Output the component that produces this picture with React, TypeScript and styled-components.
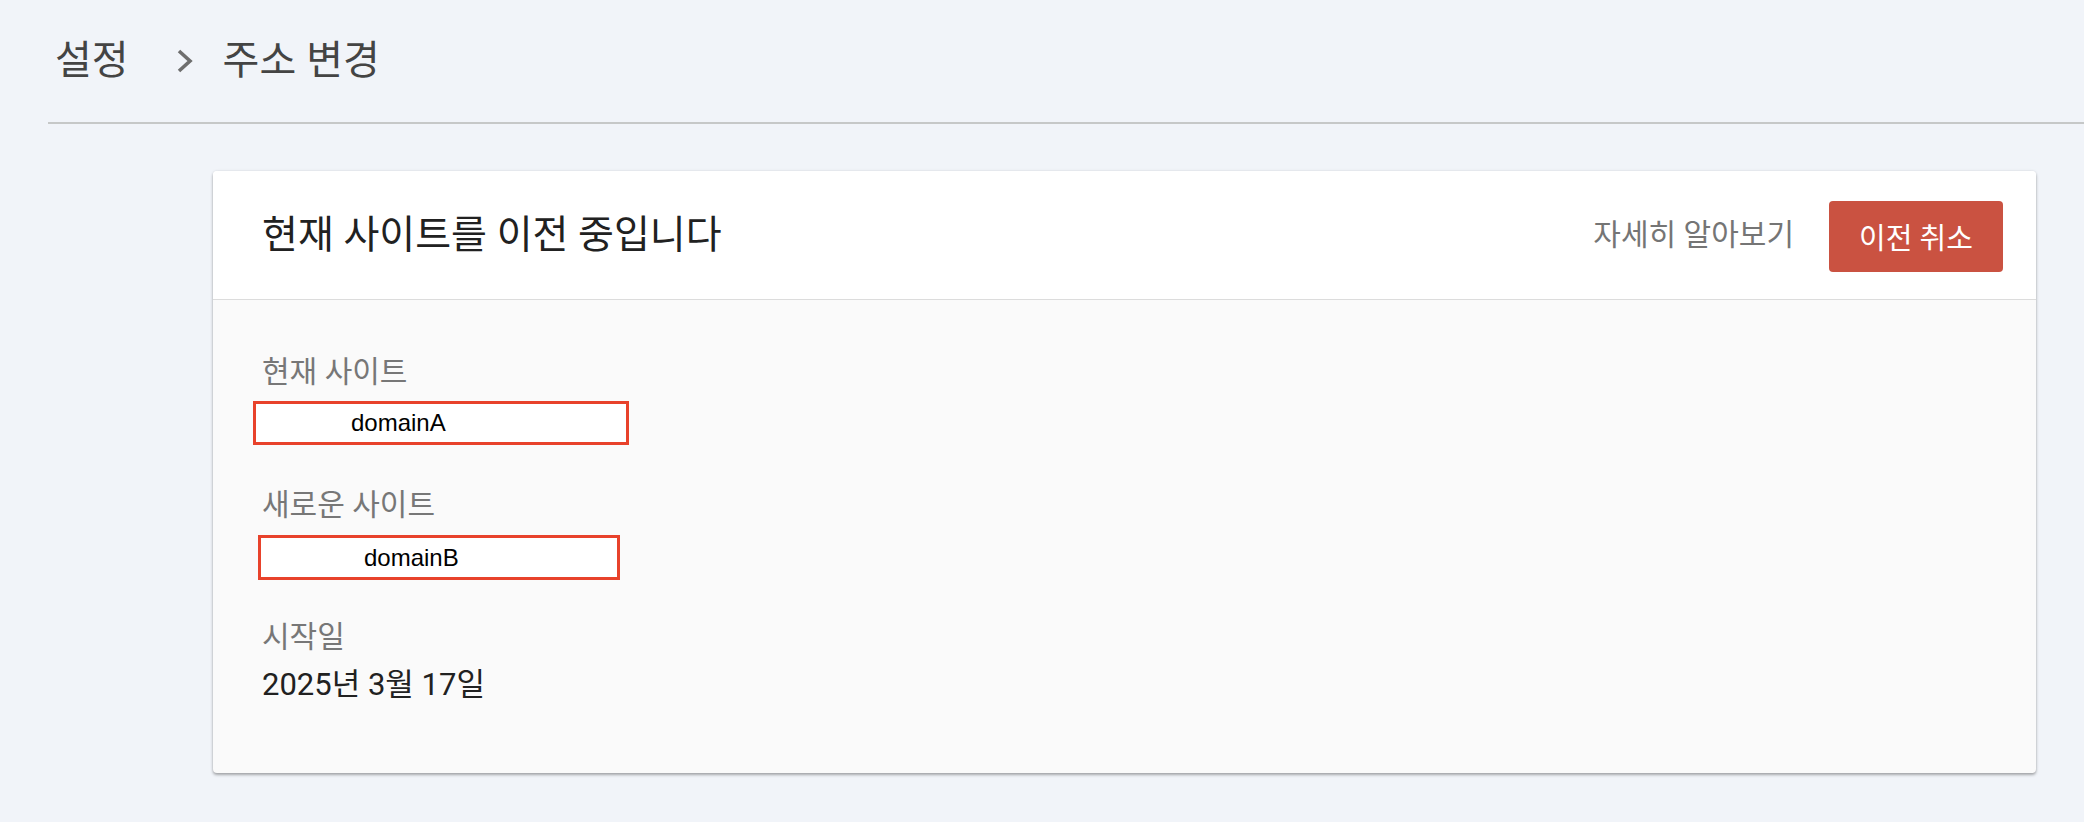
import React from "react";
import styled, { createGlobalStyle } from "styled-components";

const GlobalStyle = createGlobalStyle`
  html, body {
    margin: 0;
    padding: 0;
    background: #f1f4f9;
    font-family: Roboto, "Noto Sans CJK KR", sans-serif;
  }
  * { box-sizing: border-box; }
`;

const Page = styled.div`
  width: 2084px;
  min-height: 822px;
  background: #f1f4f9;
  padding-bottom: 48px;
`;

const Breadcrumb = styled.nav`
  height: 122px;
  display: flex;
  align-items: center;
  padding-left: 55px;
  font-size: 40px;
  color: #444444;
`;

const Crumb = styled.span`
  line-height: 1;
`;

const Chevron = styled.svg`
  width: 20px;
  height: 28px;
  margin: 0 28px 0 46px;
  flex: none;
`;

const Divider = styled.hr`
  margin: 0 0 0 48px;
  border: 0;
  height: 2px;
  background: #c6c8c8;
`;

const Card = styled.section`
  margin: 47px 48px 0 213px;
  border-radius: 4px;
  background: #fafafa;
  box-shadow: 0 2px 3px rgba(0, 0, 0, 0.3), 0 0 3px rgba(0, 0, 0, 0.1);
  overflow: hidden;
`;

const CardHeader = styled.header`
  height: 129px;
  display: flex;
  align-items: center;
  padding: 0 33px 0 49px;
  background: #ffffff;
  border-bottom: 1px solid #dcdcdc;
`;

const Title = styled.h1`
  margin: 0;
  flex: 1;
  font-size: 39px;
  font-weight: 400;
  color: #212121;
  line-height: 1;
`;

const LearnMore = styled.a`
  font-size: 30px;
  color: #757575;
  text-decoration: none;
  margin-right: 35px;
  line-height: 1;
`;

const CancelButton = styled.button`
  width: 174px;
  height: 71px;
  border: 0;
  border-radius: 4px;
  background: #ca5241;
  color: #ffffff;
  font-family: inherit;
  font-size: 29px;
  padding: 0;
  margin-top: 2px;
`;

const CardBody = styled.div`
  padding: 52px 49px 68px 49px;
  display: flex;
  flex-direction: column;
`;

const Field = styled.div<{ $gap: number; $top: number }>`
  display: flex;
  flex-direction: column;
  gap: ${(p) => p.$gap}px;
  margin-top: ${(p) => p.$top}px;
`;

const Label = styled.div`
  font-size: 30px;
  line-height: 40px;
  color: #777777;
`;

const Redacted = styled.div<{ $w: number; $h: number; $shift: number; $pad: number }>`
  width: ${(p) => p.$w}px;
  height: ${(p) => p.$h}px;
  margin-left: ${(p) => p.$shift}px;
  padding-left: ${(p) => p.$pad}px;
  border: 3px solid #e8422b;
  background: #ffffff;
  display: flex;
  align-items: center;
  font-family: "Liberation Sans", Arial, sans-serif;
  font-size: 24px;
  color: #000000;
`;

const Value = styled.div`
  font-size: 31px;
  line-height: 40px;
  color: #212121;
`;

export default function App() {
  return (
    <>
      <GlobalStyle />
      <Page>
        <Breadcrumb>
          <Crumb>설정</Crumb>
          <Chevron viewBox="0 0 20 28" aria-hidden="true">
            <polyline
              points="4,4 15,14 4,24"
              fill="none"
              stroke="#6e6e6e"
              strokeWidth="3.6"
              strokeLinecap="butt"
              strokeLinejoin="miter"
            />
          </Chevron>
          <Crumb>주소 변경</Crumb>
        </Breadcrumb>
        <Divider />
        <Card>
          <CardHeader>
            <Title>현재 사이트를 이전 중입니다</Title>
            <LearnMore href="#">자세히 알아보기</LearnMore>
            <CancelButton type="button">이전 취소</CancelButton>
          </CardHeader>
          <CardBody>
            <Field $gap={9} $top={0}>
              <Label>현재 사이트</Label>
              <Redacted $w={376} $h={44} $shift={-9} $pad={95}>
                domainA
              </Redacted>
            </Field>
            <Field $gap={10} $top={40}>
              <Label>새로운 사이트</Label>
              <Redacted $w={362} $h={45} $shift={-4} $pad={103}>
                domainB
              </Redacted>
            </Field>
            <Field $gap={8} $top={37}>
              <Label>시작일</Label>
              <Value>2025년 3월 17일</Value>
            </Field>
          </CardBody>
        </Card>
      </Page>
    </>
  );
}
